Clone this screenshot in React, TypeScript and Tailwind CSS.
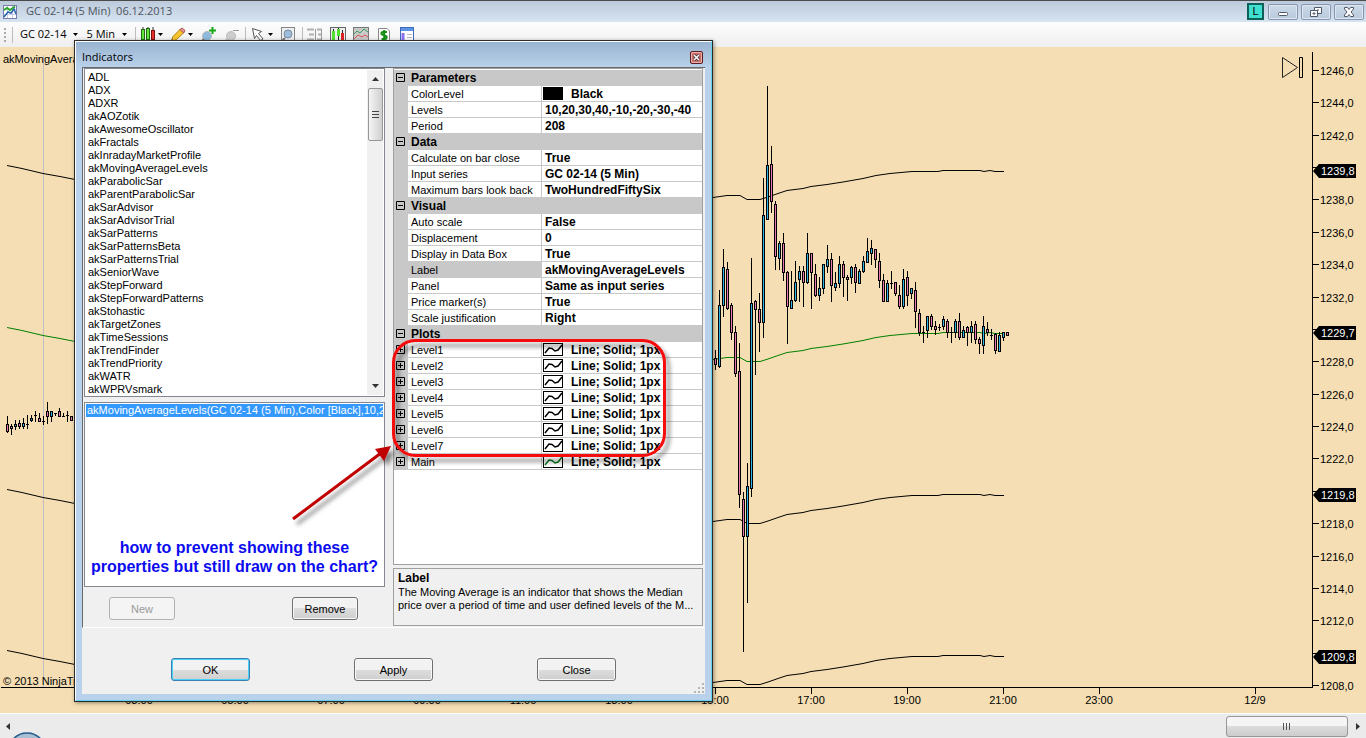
import { type ReactNode } from 'react'
import clsx from 'clsx'

type Candle = [high: number, top: number, bottom: number, low: number, up?: number]

const indicators = [
    'ADL', 'ADX', 'ADXR', 'akAOZotik', 'akAwesomeOscillator', 'akFractals', 'akInradayMarketProfile',
    'akMovingAverageLevels', 'akParabolicSar', 'akParentParabolicSar', 'akSarAdvisor', 'akSarAdvisorTrial',
    'akSarPatterns', 'akSarPatternsBeta', 'akSarPatternsTrial', 'akSeniorWave', 'akStepForward',
    'akStepForwardPatterns', 'akStohastic', 'akTargetZones', 'akTimeSessions', 'akTrendFinder',
    'akTrendPriority', 'akWATR', 'akWPRVsmark',
]

const groups = [
    {
        title: 'Parameters',
        rows: [['ColorLevel', 'Black'], ['Levels', '10,20,30,40,-10,-20,-30,-40'], ['Period', '208']],
    },
    {
        title: 'Data',
        rows: [['Calculate on bar close', 'True'], ['Input series', 'GC 02-14 (5 Min)'], ['Maximum bars look back', 'TwoHundredFiftySix']],
    },
    {
        title: 'Visual',
        rows: [
            ['Auto scale', 'False'], ['Displacement', '0'], ['Display in Data Box', 'True'],
            ['Label', 'akMovingAverageLevels'], ['Panel', 'Same as input series'], ['Price marker(s)', 'True'],
            ['Scale justification', 'Right'],
        ],
    },
    {
        title: 'Plots',
        plots: true,
        rows: ['Level1', 'Level2', 'Level3', 'Level4', 'Level5', 'Level6', 'Level7', 'Main'].map((n) => [n, 'Line; Solid; 1px']),
    },
]

// high, body top, body bottom, low, 1 = up bar
const morning: Candle[] = [
    [416, 424, 432, 433], [424, 426, 429, 435], [420, 424, 427, 430, 1], [420, 423, 427, 429], [418, 423, 427, 429, 1],
    [415, 424, 425, 429], [415, 418, 421, 422, 1], [411, 415, 416, 422], [413, 418, 422, 422], [416, 421, 422, 425],
    [402, 411, 417, 424], [411, 411, 417, 422, 1], [413, 413, 414, 416], [408, 411, 417, 417], [413, 416, 417, 417],
    [411, 415, 416, 422], [416, 416, 421, 421],
]

const evening: Candle[] = [
    [350, 358, 365, 370], [290, 305, 367, 368, 1], [249, 267, 306, 317, 1], [262, 269, 309, 310], [303, 305, 333, 340],
    [326, 332, 374, 377], [343, 371, 495, 508], [492, 499, 537, 652], [463, 486, 537, 603, 1], [258, 303, 489, 497, 1],
    [300, 301, 310, 375], [293, 309, 323, 352], [178, 215, 323, 338, 1], [86, 165, 220, 220, 1], [146, 164, 202, 213],
    [201, 204, 257, 270], [241, 243, 259, 270, 1], [233, 243, 273, 281], [271, 272, 307, 344], [271, 300, 309, 309, 1],
    [261, 282, 301, 302, 1], [266, 271, 280, 302, 1], [266, 271, 283, 307], [233, 253, 283, 284, 1], [253, 253, 273, 309],
    [264, 274, 296, 297], [277, 288, 296, 301, 1], [264, 264, 289, 294, 1], [245, 259, 267, 273, 1], [253, 259, 286, 302],
    [272, 283, 288, 291, 1], [256, 264, 284, 288, 1], [261, 264, 278, 297], [275, 277, 280, 301], [266, 267, 278, 284, 1],
    [264, 267, 283, 293], [269, 271, 284, 284, 1], [256, 261, 272, 273, 1], [238, 251, 263, 263, 1], [240, 248, 254, 265, 1],
    [249, 249, 260, 268], [253, 261, 281, 288], [274, 280, 302, 302], [280, 283, 302, 302, 1], [271, 283, 284, 289],
    [282, 282, 294, 296], [285, 295, 307, 309], [269, 279, 307, 309, 1], [271, 277, 296, 306], [288, 288, 294, 299, 1],
    [282, 290, 312, 328], [309, 313, 333, 336], [326, 332, 333, 343], [316, 316, 331, 338, 1], [314, 316, 327, 330],
    [321, 326, 330, 335], [324, 327, 328, 331], [316, 319, 327, 330, 1], [319, 321, 333, 338], [327, 332, 333, 343],
    [319, 321, 333, 338, 1], [313, 321, 338, 340], [326, 330, 338, 338, 1], [326, 327, 333, 346], [321, 326, 333, 343, 1],
    [321, 324, 340, 344], [337, 339, 344, 354], [316, 326, 346, 354, 1], [322, 329, 333, 336], [329, 335, 336, 340],
    [333, 334, 351, 354], [332, 335, 352, 352, 1], [332, 332, 338, 341, 1], [332, 332, 336, 336],
]

const averages = [
    { shift: 0, color: '#000' },
    { shift: 162, color: '#008000' },
    { shift: 324, color: '#000' },
    { shift: 485, color: '#000' },
]

const prices = Array.from({ length: 20 }, (_, i) => ({ value: 1246 - i * 2, y: Math.round(71 + i * 32.37) }))
const markers = [{ label: '1239,8', y: 171 }, { label: '1229,7', y: 333 }, { label: '1219,8', y: 495 }, { label: '1209,8', y: 657 }]
const times = [
    ['03:00', 139], ['05:00', 235], ['07:00', 331], ['09:00', 427], ['11:00', 523], ['13:00', 619],
    ['15:00', 715], ['17:00', 811], ['19:00', 907], ['21:00', 1003], ['23:00', 1099], ['12/9', 1255],
] as [string, number][]

function Candles({ data, start }: { data: Candle[]; start: number }) {
    return (
        <g shapeRendering="crispEdges">
            {data.map(([high, top, bottom, low, up], i) => {
                const x = start + i * 4
                return (
                    <g key={x}>
                        <rect x={x} y={high} width="1" height={low - high} />
                        <rect x={x - 1} y={top} width="3" height={bottom - top} />
                        {bottom - top > 2 && (
                            <rect x={x} y={top + 1} width="1" height={bottom - top - 2} fill={up ? '#2fb4e8' : '#e878b0'} />
                        )}
                    </g>
                )
            })}
        </g>
    )
}

function Chart() {
    return (
        <main className="flex min-h-[666px] flex-1 overflow-hidden bg-[#f5deb3]">
            <div className="min-w-0 flex-1 overflow-hidden">
                <svg width="1312" height="666" viewBox="0 47 1312 666" className="block font-['Liberation_Sans',sans-serif] text-[11px]">
                    <path d="M43.500 55V687" stroke="#c0c0c0" />
                    <text x="3" y="63">akMovingAverageLevels</text>
                    {averages.map((a) => (
                        <g key={a.shift} transform={`translate(0 ${a.shift})`} fill="none" stroke={a.color}>
                            <path d="M7 165.500L22 168.500 43 173.500 60 176.500 75 179.500" />
                            <path d="M713 197.500L727 195.500H740L747 199.500H760L768 197 778 193.500 787 190.500 803 188.500 811 186.500 827 184.500 843 182 863 178.500 876 175.500 890 173.500 912 171.500H938L943 170.500H980L984 171.500 990 170.500 995 171.500H1004" />
                        </g>
                    ))}
                    <Candles data={morning} start={7} />
                    <Candles data={evening} start={715} />
                    <text x="3" y="685">© 2013 NinjaTrader, LLC</text>
                    <path d="M1 687.500H1312" stroke="#000" />
                    {times.map(([label, x]) => (
                        <g key={label}>
                            <path d={`M${x + 0.5} 687V694`} stroke="#000" />
                            <text x={x} y="704" textAnchor="middle">{label}</text>
                        </g>
                    ))}
                    <g fill="none" stroke="#222">
                        <path d="M1282.500 57.500V77.500L1297.500 67.500Z" />
                        <path d="M1299.500 57.500H1302.500V77.500H1299.500Z" stroke="#000" />
                    </g>
                </svg>
            </div>
            <svg width="54" height="666" viewBox="1312 47 54 666" className="block shrink-0 font-['Liberation_Sans',sans-serif] text-[11px]">
                <path d="M1312.500 52V688" stroke="#000" />
                {prices.map((p) => (
                    <g key={p.value}>
                        <path d={`M1313 ${p.y - 0.5}H1319`} stroke="#000" />
                        {p.value % 10 !== 0 && <text x="1320" y={p.y + 4}>{p.value},0</text>}
                    </g>
                ))}
                {markers.map((m) => (
                    <g key={m.label}>
                        <path d={`M1313 ${m.y}L1319 ${m.y - 7}H1356V${m.y + 7}H1319Z`} />
                        <text x="1321" y={m.y + 4} fill="#fff">{m.label}</text>
                    </g>
                ))}
            </svg>
        </main>
    )
}

function Caret() {
    return <svg width="5" height="3" viewBox="0 0 5 3"><path d="M0 0H5L2.500 3Z" /></svg>
}

function Separator() {
    return <span className="h-4 w-px bg-[#bdbdbd]" />
}

function Tool({ label, caret, children }: { label: string; caret?: boolean; children: ReactNode }) {
    return (
        <button type="button" aria-label={label} className="flex items-center gap-[2px]">
            <svg width="16" height="16" viewBox="0 0 16 16">{children}</svg>
            {caret && <Caret />}
        </button>
    )
}

function Bars() {
    return (
        <>
            <path d="M3 0V16M8 0V16M13 0V16" stroke="#333" />
            <rect x="1.500" y="2.500" width="3" height="10" fill="#5fe63c" stroke="#24680f" />
            <rect x="6.500" y="1.500" width="3" height="11" fill="#5fe63c" stroke="#24680f" />
            <rect x="11.500" y="3.500" width="3" height="9" fill="#e83030" stroke="#7c1010" />
        </>
    )
}

function Toolbar() {
    return (
        <div className="flex h-[25px] items-center bg-linear-to-b from-[#fdfdfd] to-[#efefef] pl-1 font-['Open_Sans',sans-serif] text-[11px]">
            <svg width="3" height="16" viewBox="0 0 3 16" className="mr-[5px]">
                <path d="M1 1V16" stroke="#aaa" strokeWidth="2" strokeDasharray="2 2" />
            </svg>
            <Separator />
            <button type="button" className="ml-[7px] flex items-center gap-[7px] whitespace-nowrap">GC 02-14 <Caret /></button>
            <button type="button" className="mr-2 ml-2 flex items-center gap-[7px] whitespace-nowrap">5 Min <Caret /></button>
            <Separator />
            <div className="ml-1 flex gap-[7px]">
                <Tool label="Chart style" caret><Bars /></Tool>
                <Tool label="Drawing tools" caret>
                    <path d="M1 15L3 9.500 10.500 2 14 5.500 6.500 12.500Z" fill="#f7c52c" stroke="#b07c10" />
                    <path d="M10 2.500L12 1 15 3.500 13.500 6Z" fill="#e89898" stroke="#a85050" />
                    <path d="M1 15L2 12 4 14Z" fill="#333" />
                </Tool>
                <Tool label="Zoom in">
                    <circle cx="7" cy="9" r="4.500" fill="#8fb8dd" stroke="#b4bac2" />
                    <path d="M4 12L0 16" stroke="#777" strokeWidth="2" />
                    <path d="M12.500 0V7M9 3.500H16" stroke="#18a818" strokeWidth="2" />
                </Tool>
                <Tool label="Zoom out">
                    <circle cx="8" cy="9" r="4.500" fill="#cdcdcd" stroke="#bbb" />
                    <path d="M4 12L1 16" stroke="#bbb" strokeWidth="2" />
                    <path d="M10 3.500H16" stroke="#999" />
                </Tool>
            </div>
            <div className="ml-[6px] flex items-center gap-1">
                <Separator />
                <Tool label="Pointer" caret>
                    <path d="M2.500 1.500L11.500 4.500 8.500 6.500 13 12 10.500 13.500 6.500 8.500 4.500 11.500Z" fill="#fff" stroke="#555" />
                </Tool>
            </div>
            <div className="ml-[7px] flex items-center gap-[6px]">
                <Tool label="Zoom frame">
                    <rect x="1.500" y=".5" width="13" height="15" fill="#eee" stroke="#888" />
                    <circle cx="8" cy="7" r="4" fill="#9dbddb" stroke="#7a8ca0" />
                    <path d="M5 11L2 14" stroke="#777" strokeWidth="2" />
                </Tool>
                <Separator />
            </div>
            <div className="ml-1 flex gap-[7px]">
                <Tool label="Order entry">
                    <path d="M0 2.500H7M2 7.500H7M0 12.500H7M10 2.500H15M11 7.500H15M10 12.500H15" stroke="#b0b0b0" strokeWidth="2" />
                    <path d="M8.500 2V13M14.500 3V15" stroke="#999" />
                </Tool>
                <Tool label="Data series">
                    <rect x=".5" y=".5" width="15" height="15" fill="#eee" stroke="#666" />
                    <path d="M3.500 2V15M8.500 1V15M12.500 3V15" stroke="#222" />
                    <path d="M3.500 4V13M8.500 2V9" stroke="#4fdf2f" strokeWidth="3" />
                    <path d="M12.500 6V14" stroke="#d22" strokeWidth="3" />
                </Tool>
                <Tool label="Indicators">
                    <rect x=".5" y=".5" width="15" height="15" fill="#c9c9c9" stroke="#777" />
                    <path d="M1 7L4 4 7 6 11 2 15 5" fill="none" stroke="#3c9c5c" />
                    <path d="M1 12L5 8 9 10 12 8 15 10" fill="none" stroke="#e05050" />
                </Tool>
                <Tool label="Strategies">
                    <path d="M2.500 1.500H11L13.500 4V15.500H2.500Z" fill="#fff" stroke="#888" />
                    <path d="M11 5H7Q5 5 5.500 7L10.500 9.500Q11 12 9 12H5.500M8.200 3V14" fill="none" stroke="#159015" strokeWidth="2" />
                </Tool>
                <Tool label="Properties">
                    <rect x="1.500" y=".5" width="13" height="15" fill="#fff" stroke="#3e6ab8" />
                    <path d="M2 2.500H14" stroke="#5b93e6" strokeWidth="3" />
                    <path d="M4 6V15" stroke="#8b70f0" strokeWidth="3" />
                    <path d="M8 7.500H13M8 10.500H13" stroke="#bbb" />
                </Tool>
            </div>
        </div>
    )
}

function WindowButton({ label, children }: { label: string; children: ReactNode }) {
    return (
        <button type="button" aria-label={label} className="flex h-4 w-[30px] items-center justify-center rounded-[2px] border border-[#8795b0] bg-linear-to-b from-[#ccd9e8] to-[#b9cadd] shadow-[inset_0_0_0_1px_#dfe8f2]">
            <svg width="12" height="12" viewBox="0 0 12 12" fill="#fff" stroke="#52586b">{children}</svg>
        </button>
    )
}

function TitleBar() {
    return (
        <header className="flex h-[22px] items-center border-t border-[#4a4a4a] bg-linear-to-b from-[#bccadb] to-[#d7e4f1] pr-[2px] pl-[3px]">
            <svg width="14" height="14" viewBox="0 0 14 14">
                <rect x=".5" y=".5" width="13" height="13" fill="#fff" stroke="#777ba8" />
                <path d="M1 4.500H13M1 9.500H13M4.500 1V13M9.500 1V13" stroke="#c8cce8" />
                <path d="M1 5L4 3 7 5 12 1.500" fill="none" stroke="#27a827" strokeWidth="2" />
                <path d="M1 12L5 7 8 8 11 4 13 9" fill="none" stroke="#2b62b0" strokeWidth="1.500" />
            </svg>
            <h1 className="ml-[9px] flex-1 font-['Open_Sans',sans-serif] text-[11px] whitespace-pre text-[#4c5560]">GC 02-14 (5 Min)  06.12.2013</h1>
            <span className="mr-1 flex size-[17px] items-center justify-center border-2 border-[#0f5f59] bg-[#40e0d0] font-['Liberation_Sans',sans-serif] text-[11px]">L</span>
            <div className="flex gap-[3px]">
                <WindowButton label="Minimize"><rect x="1.500" y="6.500" width="9" height="3" rx="1" /></WindowButton>
                <WindowButton label="Restore">
                    <path d="M4.500 1.500H11.500V7.500H4.500ZM7 4H9" />
                    <path d="M.5 4.500H7.500V10.500H.5ZM3 7H5V8H3Z" />
                </WindowButton>
                <WindowButton label="Close">
                    <path d="M1.500 1.500H4.500L6 3.500 7.500 1.500H10.500V3L8 6 10.500 9V10.500H7.500L6 8.500 4.500 10.500H1.500V9L4 6 1.500 3Z" />
                </WindowButton>
            </div>
        </header>
    )
}

type DialogButtonProps = { children: ReactNode; className?: string; disabled?: boolean; primary?: boolean }

function DialogButton({ children, className, disabled, primary }: DialogButtonProps) {
    return (
        <button
            type="button"
            disabled={disabled}
            className={clsx(
                'h-[23px] rounded-[3px] border leading-4',
                disabled
                    ? 'border-[#b0b3b5] bg-[#f4f4f4] text-[#9a9a9a]'
                    : 'bg-linear-to-b from-[#f2f2f2] from-50% via-[#dddddd] via-50% to-[#cfcfcf]',
                !disabled && !primary && 'border-[#707070] shadow-[inset_0_0_0_1px_#f8f8f8]',
                primary && 'border-[#3c7fb1] shadow-[inset_0_0_0_1px_#48d0f8]',
                className,
            )}
        >
            {children}
        </button>
    )
}

function IndicatorList() {
    return (
        <div className="flex h-[329px] border border-[#828790] bg-white p-px">
            <ul role="listbox" aria-label="Available indicators" className="flex-1 pt-px pl-[2px] leading-[13px]">
                {indicators.map((name) => (
                    <li key={name} role="option" aria-selected="false">{name}</li>
                ))}
            </ul>
            <div className="flex w-4 flex-col items-center bg-[#f0f0f0]">
                <svg width="7" height="18" viewBox="0 0 7 18"><path d="M0 11L3.500 7 7 11Z" fill="#333" /></svg>
                <div className="flex h-[53px] w-[15px] items-center justify-center rounded-[2px] border border-[#979797] bg-linear-to-r from-[#f5f5f5] to-[#cfcfcf]">
                    <svg width="7" height="9" viewBox="0 0 7 9"><path d="M0 1.500H7M0 4.500H7M0 7.500H7" stroke="#444" /></svg>
                </div>
                <svg width="7" height="18" viewBox="0 0 7 18" className="mt-auto"><path d="M0 7L3.500 11 7 7Z" fill="#333" /></svg>
            </div>
        </div>
    )
}

function Expander({ open, label }: { open?: boolean; label: string }) {
    return (
        <button type="button" aria-label={label} className="ml-[2px] block">
            <svg width="9" height="9" viewBox="0 0 9 9">
                <path d="M.5 .5H8.500V8.500H.5ZM2 4.500H7" fill="none" stroke="#000" />
                {!open && <path d="M4.500 2V7" stroke="#000" />}
            </svg>
        </button>
    )
}

function PropertyValue({ name, value, plot }: { name: string; value: string; plot?: boolean }) {
    if (name !== 'ColorLevel' && !plot) return <span className="block pt-px pl-[3px]">{value}</span>
    return (
        <span className="flex items-center gap-2 pl-px">
            {plot ? (
                <svg width="20" height="13" viewBox="0 0 20 13">
                    <rect x=".5" y=".5" width="19" height="12" fill="#fff" stroke="#000" />
                    <path d="M2 10L6 5 9 5.500 12 8 15 7 19 2" fill="none" stroke={name === 'Main' ? '#0a7a1a' : '#000'} strokeWidth="1.500" />
                </svg>
            ) : (
                <span className="h-[13px] w-5 bg-black" />
            )}
            <span className="pt-px">{value}</span>
        </span>
    )
}

function PropertyGrid() {
    return (
        <div className="h-[497px] border border-[#a0a0a0] bg-white pt-px">
            <table className="w-full table-fixed border-separate border-spacing-0 leading-[14px]">
                <colgroup>
                    <col className="w-[14px]" />
                    <col className="w-[134px]" />
                    <col />
                </colgroup>
                {groups.map((group) => (
                    <tbody key={group.title}>
                        <tr className="h-4 bg-[#c8c8c8]">
                            <td className="p-0 pt-[3px] align-top"><Expander open label={`Collapse ${group.title}`} /></td>
                            <th colSpan={2} className="p-0 pl-[3px] text-left text-[12px] font-bold">{group.title}</th>
                        </tr>
                        {group.rows.map(([name, value]) => (
                            <tr key={name} className="h-4">
                                <td className="bg-[#c8c8c8] p-0 pt-[3px] align-top">{group.plots && <Expander label={`Expand ${name}`} />}</td>
                                <td className={clsx('border-r border-b border-[#c8c8c8] p-0 pt-px pl-[3px] whitespace-nowrap', name === 'Label' && 'bg-[#c8c8c8]')}>{name}</td>
                                <td className="overflow-hidden border-b border-[#c8c8c8] p-0 text-[12px] font-bold whitespace-nowrap">
                                    <PropertyValue name={name} value={value} plot={group.plots} />
                                </td>
                            </tr>
                        ))}
                    </tbody>
                ))}
            </table>
        </div>
    )
}

function Annotation() {
    return (
        <svg width="639" height="661" viewBox="74 40 639 661" className="pointer-events-none absolute -top-px -left-px" fill="none">
            <defs>
                <filter id="shadow" x="-20%" y="-20%" width="140%" height="140%">
                    <feDropShadow dx="4" dy="5" stdDeviation="2" floodColor="#000" floodOpacity=".45" />
                </filter>
            </defs>
            <rect x="393.500" y="340.500" width="271" height="115" rx="22" stroke="#f50a0a" strokeWidth="3" filter="url(#shadow)" />
            <g filter="url(#shadow)">
                <path d="M293 519L381 453" stroke="#c00000" strokeWidth="3" />
                <path d="M391 446L375 449 384 461Z" fill="#c00000" />
            </g>
        </svg>
    )
}

function IndicatorsDialog() {
    return (
        <section role="dialog" aria-labelledby="dialog-title" className="absolute top-[40px] left-[74px] w-[639px] border border-[#2b2b2b] bg-[#b9d1ea] font-['Liberation_Sans',sans-serif] text-[11px] text-black shadow-[1px_1px_4px_#00000066]">
            <div className="border border-t-white border-r-[#5fd3f0] border-b-[#5fd3f0] border-l-white px-[6px] pb-[6px]">
                <div className="-mx-[6px] flex h-[25px] items-center bg-linear-to-b from-[#99b4d1] to-[#b9d1ea] pr-2 pl-[6px]">
                    <h2 id="dialog-title" className="flex-1 pt-[5px] font-['Open_Sans',sans-serif] text-[11px]">Indicators</h2>
                    <button type="button" aria-label="Close dialog" className="mt-[5px] flex size-[13px] items-center justify-center rounded-[2px] border border-[#5c1c20] bg-[#c9706c] shadow-[inset_0_0_0_1px_#e8b0ac]">
                        <svg width="7" height="7" viewBox="0 0 7 7"><path d="M1 1L6 6M6 1L1 6" stroke="#44272b" strokeWidth="3" /><path d="M1 1L6 6M6 1L1 6" stroke="#fff" strokeWidth="1.500" /></svg>
                    </button>
                </div>
                <div className="bg-[#f0f0f0]">
                    <div className="flex gap-2 border-t border-b border-l border-t-[#696969] border-b-white border-l-[#696969] pr-[2px] pl-px">
                        <div className="w-[301px]">
                            <IndicatorList />
                            <div className="mt-[5px] flex h-[185px] flex-col justify-between border border-[#828790] bg-white p-px">
                                <ul role="listbox" aria-label="Applied indicators">
                                    <li role="option" aria-selected="true" className="overflow-hidden bg-[#3399ff] pl-px leading-[13px] whitespace-nowrap text-white">akMovingAverageLevels(GC 02-14 (5 Min),Color [Black],10,20</li>
                                </ul>
                                <p className="pb-[9px] text-center text-[16px] leading-[19px] font-bold whitespace-nowrap text-[#0b0bf0]">
                                    how to prevent showing these
                                    <br />
                                    properties but still draw on the chart?
                                </p>
                            </div>
                            <div className="flex justify-between pt-[10px] pr-[27px] pb-[7px] pl-[25px]">
                                <DialogButton disabled className="w-[66px]">New</DialogButton>
                                <DialogButton className="w-[66px]">Remove</DialogButton>
                            </div>
                        </div>
                        <div className="flex min-w-0 flex-1 flex-col gap-[3px] pb-px">
                            <PropertyGrid />
                            <div className="flex-1 border border-[#a0a0a0] px-1 pt-px leading-[13px]">
                                <h3 className="text-[12px] leading-4 font-bold">Label</h3>
                                <p className="line-clamp-2">The Moving Average is an indicator that shows the Median price over a period of time and user defined levels of the M...</p>
                            </div>
                        </div>
                    </div>
                    <div className="flex h-[66px] justify-between px-[89px] pt-[30px]">
                        <DialogButton primary className="w-[79px]">OK</DialogButton>
                        <DialogButton className="w-[79px]">Apply</DialogButton>
                        <DialogButton className="w-[79px]">Close</DialogButton>
                    </div>
                </div>
            </div>
            <svg width="10" height="10" viewBox="0 0 10 10" className="absolute right-[8px] bottom-[8px]" fill="#b5b5b5">
                <path d="M8 0H10V2H8ZM4 4H6V6H4ZM8 4H10V6H8ZM0 8H2V10H0ZM4 8H6V10H4ZM8 8H10V10H8Z" />
            </svg>
            <Annotation />
        </section>
    )
}

function ScrollBar() {
    return (
        <footer className="relative flex h-[25px] items-center overflow-hidden border-t border-white bg-[#ebebeb] px-[6px]">
            <svg width="4" height="7" viewBox="0 0 4 7"><path d="M4 0V7L0 3.500Z" fill="#333" /></svg>
            <div className="mr-2 ml-auto flex h-[21px] w-[122px] items-center justify-center rounded-[3px] border border-[#979797] bg-linear-to-b from-[#f5f5f5] from-50% via-[#dcdcdc] via-50% to-[#cccccc]">
                <svg width="8" height="7" viewBox="0 0 8 7"><path d="M.5 0V7M3.500 0V7M6.500 0V7" stroke="#555" /></svg>
            </div>
            <svg width="4" height="7" viewBox="0 0 4 7"><path d="M0 0V7L4 3.500Z" fill="#333" /></svg>
            <svg width="30" height="6" viewBox="0 0 30 6" className="absolute bottom-0 left-3"><circle cx="15" cy="20" r="19" fill="#a9c0d4" stroke="#235a8c" strokeWidth="1.500" /></svg>
        </footer>
    )
}

export default function App() {
    return (
        <div className="relative flex min-h-screen flex-col overflow-hidden text-black">
            <TitleBar />
            <Toolbar />
            <Chart />
            <ScrollBar />
            <IndicatorsDialog />
        </div>
    )
}
